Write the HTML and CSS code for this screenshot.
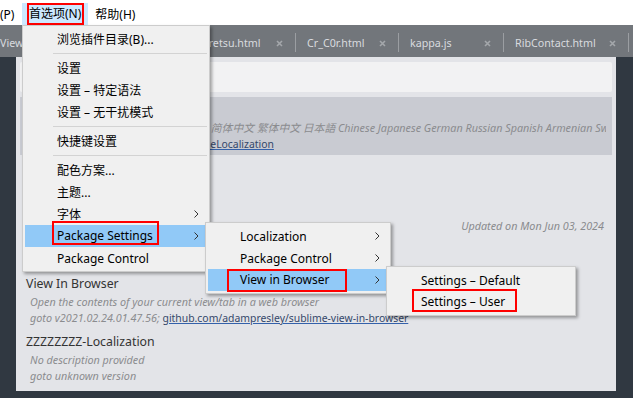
FILE: index.html
```html
<!DOCTYPE html>
<html lang="zh-CN">
<head>
<meta charset="utf-8">
<title>Sublime Text</title>
<link rel="stylesheet" href="styles.css">
</head>
<body>
<div class="app">
  <div class="menubar">
    <div class="mb-item mb-cut">(P)</div>
    <div class="mb-item mb-open"><span class="mark mark-n">首选项(N)</span></div>
    <div class="mb-item">帮助(H)</div>
  </div>

  <div class="tabbar">
    <div class="tab t-view"><span class="tab-name">View In Browser</span><svg class="tab-x" width="7" height="7" viewBox="0 0 7 7"><path d="M1 1L6 6M6 1L1 6"/></svg></div>
    <div class="tab-sep"></div>
    <div class="tab t-hai"><span class="tab-name">Hairetsu.html</span><svg class="tab-x" width="7" height="7" viewBox="0 0 7 7"><path d="M1 1L6 6M6 1L1 6"/></svg></div>
    <div class="tab-sep"></div>
    <div class="tab t-cr"><span class="tab-name">Cr_C0r.html</span><svg class="tab-x" width="7" height="7" viewBox="0 0 7 7"><path d="M1 1L6 6M6 1L1 6"/></svg></div>
    <div class="tab-sep"></div>
    <div class="tab t-kappa"><span class="tab-name">kappa.js</span><svg class="tab-x" width="7" height="7" viewBox="0 0 7 7"><path d="M1 1L6 6M6 1L1 6"/></svg></div>
    <div class="tab-sep"></div>
    <div class="tab t-rib"><span class="tab-name">RibContact.html</span><svg class="tab-x" width="7" height="7" viewBox="0 0 7 7"><path d="M1 1L6 6M6 1L1 6"/></svg></div>
    <div class="tab-sep"></div>
    <div class="tab t-more"></div>
  </div>

  <div class="workspace">
    <div class="panel">
      <div class="panel-input"></div>
      <div class="list">
        <div class="item selected">
          <div class="item-title"><span>ChineseLocalization</span></div>
          <div class="item-line desc"><span class="desc-lead">Localization/Translation for Sublime Text</span> 简体中文 繁体中文 日本語 Chinese Japanese German Russian Spanish Armenian Swedish</div>
          <div class="item-line">goto v2.7.2; <span class="link">github.com/rexdf/ChineseLocalization</span></div>
        </div>
        <div class="item">
          <div class="item-title"><span>Terminus</span></div>
          <div class="item-line desc">No description provided</div>
          <div class="item-line">goto unknown version</div>
        </div>
        <div class="item">
          <div class="item-title"><span>Package Control</span><span class="updated">Updated on Mon Jun 03, 2024</span></div>
          <div class="item-line desc">A full-featured package manager</div>
          <div class="item-line">goto v4.0.6; <span class="link">packagecontrol.io</span></div>
        </div>
        <div class="item">
          <div class="item-title"><span>View In Browser</span></div>
          <div class="item-line desc">Open the contents of your current view/tab in a web browser</div>
          <div class="item-line">goto v2021.02.24.01.47.56; <span class="link">github.com/adampresley/sublime-view-in-browser</span></div>
        </div>
        <div class="item">
          <div class="item-title"><span>ZZZZZZZZ-Localization</span></div>
          <div class="item-line desc">No description provided</div>
          <div class="item-line">goto unknown version</div>
        </div>
      </div>
    </div>
  </div>

  <div class="menu m1">
    <div class="mi"><span>浏览插件目录(B)...</span></div>
    <div class="msep"></div>
    <div class="mi"><span>设置</span></div>
    <div class="mi"><span>设置 – 特定语法</span></div>
    <div class="mi"><span>设置 – 无干扰模式</span></div>
    <div class="msep"></div>
    <div class="mi"><span>快捷键设置</span></div>
    <div class="msep"></div>
    <div class="mi"><span>配色方案...</span></div>
    <div class="mi"><span>主题...</span></div>
    <div class="mi"><span>字体</span><svg class="chev" width="5" height="8" viewBox="0 0 5 8"><path d="M.5.5L4 4 .5 7.5"/></svg></div>
    <div class="mi active"><span class="mark mark-ps">Package Settings</span><svg class="chev" width="5" height="8" viewBox="0 0 5 8"><path d="M.5.5L4 4 .5 7.5"/></svg></div>
    <div class="mi"><span>Package Control</span></div>
  </div>

  <div class="menu m2">
    <div class="mi"><span>Localization</span><svg class="chev" width="5" height="8" viewBox="0 0 5 8"><path d="M.5.5L4 4 .5 7.5"/></svg></div>
    <div class="mi"><span>Package Control</span><svg class="chev" width="5" height="8" viewBox="0 0 5 8"><path d="M.5.5L4 4 .5 7.5"/></svg></div>
    <div class="mi active"><span class="mark mark-vib">View in Browser</span><svg class="chev" width="5" height="8" viewBox="0 0 5 8"><path d="M.5.5L4 4 .5 7.5"/></svg></div>
  </div>

  <div class="menu m3">
    <div class="mi"><span>Settings – Default</span></div>
    <div class="mi"><span class="mark mark-su">Settings – User</span></div>
  </div>
</div>
</body>
</html>
```

FILE: styles.css
```css
* { box-sizing: border-box; }

html, body {
  margin: 0;
  padding: 0;
}

body {
  width: 633px;
  height: 398px;
  overflow: hidden;
  background: #303841;
  font-family: "Noto Sans", "Noto Sans CJK SC", sans-serif;
}

.app {
  position: relative;
  width: 633px;
  height: 398px;
  display: flex;
  flex-direction: column;
}

/* ---------- menubar ---------- */
.menubar {
  height: 25px;
  background: #ffffff;
  display: flex;
  align-items: flex-start;
  padding-top: 3px;
  font-size: 12px;
  color: #000;
}

.mb-item {
  height: 22px;
  display: flex;
  align-items: center;
  padding: 0 7px;
  white-space: nowrap;
}

.mb-cut {
  padding-left: 0;
  width: 22px;
}

.mb-open {
  background: #cce8ff;
}

/* ---------- red annotation boxes ---------- */
.mark {
  position: relative;
  display: inline-block;
  line-height: 16px;
}

.mark::after {
  content: "";
  position: absolute;
  border: 2px solid #f00;
}

.mark-n::after { left: -2px; right: -3px; top: -3px; bottom: -3px; }
.mark-ps::after { left: -5px; right: -6px; top: -7px; bottom: -1px; }
.mark-vib::after { left: -13px; right: -18px; top: -3px; bottom: -4px; }
.mark-su::after { left: -9px; right: -12px; top: -5px; bottom: -2px; }

/* ---------- tab bar ---------- */
.tabbar {
  height: 32px;
  background: #72767b;
  display: flex;
  align-items: flex-start;
  padding-top: 4px;
  overflow: hidden;
  font-size: 10.7px;
}

.tab {
  flex: none;
  height: 28px;
  display: flex;
  align-items: center;
  justify-content: space-between;
  padding: 0 12px 0 11px;
  color: #d9dbdf;
  white-space: nowrap;
  overflow: hidden;
}

.tab-name { overflow: hidden; }

.tab-x {
  flex: none;
  stroke: #a4a7ab;
  stroke-width: 1.6;
}

.t-view { width: 180px; padding-left: 0; }
.t-hai { width: 114px; }
.t-cr { width: 102px; }
.t-kappa { width: 104px; }
.t-rib { width: 124px; }
.t-more { width: 80px; }

.tab-sep {
  flex: none;
  width: 1px;
  height: 19px;
  margin-top: 4px;
  background: #9b9ea2;
}

/* ---------- workspace / quick panel ---------- */
.workspace {
  flex: 1;
  display: flex;
}

.panel {
  margin-left: 16px;
  width: 600px;
  height: 334px;
  background: #e3e4e8;
  padding: 5px 4px;
  display: flex;
  flex-direction: column;
  gap: 5px;
  overflow: hidden;
}

.panel-input {
  height: 30px;
  flex: none;
  background: #f2f2f3;
  border-radius: 2px;
}

.list {
  display: flex;
  flex-direction: column;
}

.item {
  height: 58px;
  flex: none;
  padding: 3px 6px 0 6px;
  overflow: hidden;
}

.item.selected {
  background: #c9cbd2;
}

.item-title {
  display: flex;
  justify-content: space-between;
  align-items: center;
  height: 18px;
  font-size: 12.3px;
  color: #333;
  white-space: nowrap;
}

.updated {
  font-size: 10.8px;
  font-style: italic;
  color: #8a8b8e;
  margin-right: 2px;
}

.item-line {
  padding-left: 4px;
  height: 16px;
  line-height: 16px;
  font-size: 10.8px;
  font-style: italic;
  color: #8b8c8f;
  white-space: nowrap;
  overflow: hidden;
}

.item-line.desc { margin-top: 2px; }

.desc-lead {
  display: inline-block;
  width: 178px;
  overflow: hidden;
  vertical-align: top;
}

.link {
  font-style: normal;
  font-size: 10.4px;
  color: #34476a;
  text-decoration: underline;
  text-decoration-color: #3461aa;
}

/* ---------- context menus ---------- */
.menu {
  position: absolute;
  background: #f0f0f0;
  border: 1px solid #cccccc;
  padding: 2px;
  box-shadow: 2px 2px 3px rgba(0, 0, 0, 0.35);
  font-size: 12px;
  color: #000;
}

.m1 { left: 22px; top: 25px; width: 188px; }
.m2 { left: 205px; top: 222px; width: 186px; }
.m3 { left: 386px; top: 266px; width: 190px; }

.mi {
  height: 22px;
  display: flex;
  align-items: center;
  justify-content: space-between;
  padding: 0 8px 0 32px;
  white-space: nowrap;
}

.mi.active { background: #91c9f7; }

.chev {
  flex: none;
  fill: none;
  stroke: #333;
  stroke-width: 1;
}

.msep {
  height: 7px;
  display: flex;
  align-items: center;
  padding: 0 0 0 28px;
}

.msep::before {
  content: "";
  flex: 1;
  height: 1px;
  background: #d3d3d3;
}
```
